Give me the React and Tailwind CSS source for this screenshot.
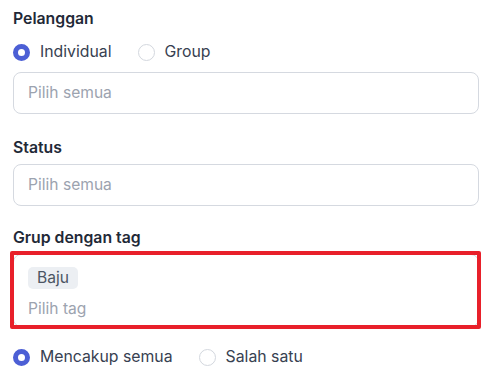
import React from "react";

function Radio({ checked, label }) {
  return (
    <div className="flex items-center gap-[10px]">
      {checked ? (
        <span className="w-[17px] h-[17px] rounded-full border-[5px] border-[#4c5fd5] bg-white box-border" />
      ) : (
        <span className="w-[17px] h-[17px] rounded-full border border-[#d3d7de] bg-white box-border" />
      )}
      <span className="text-[15.8px] leading-5 text-[#374151]">{label}</span>
    </div>
  );
}

export default function App() {
  return (
    <div
      className="w-[492px] h-[383px] bg-white px-[13px] pt-[9px] overflow-hidden"
      style={{ fontFamily: "Inter, 'Noto Sans', sans-serif" }}
    >
      <div className="text-[15.8px] leading-5 font-semibold text-[#1f2937]">Pelanggan</div>
      <div className="mt-[13px] flex items-center gap-[26px]">
        <Radio checked label="Individual" />
        <Radio label="Group" />
      </div>
      <div className="mt-[10px] h-[42px] rounded-lg border border-[#d5d9e0] flex items-center pl-[14px] text-[15.6px] text-[#9ca3af]">
        Pilih semua
      </div>

      <div className="mt-[24px] text-[15.8px] leading-5 font-semibold text-[#1f2937]">Status</div>
      <div className="mt-[6px] h-[42px] rounded-lg border border-[#d5d9e0] flex items-center pl-[14px] text-[15.6px] text-[#9ca3af]">
        Pilih semua
      </div>

      <div className="mt-[22px] text-[15.8px] leading-5 font-semibold text-[#1f2937]">Grup dengan tag</div>
      <div className="relative mt-[6px] h-[73px] rounded-lg border border-[#d5d9e0] pl-[14px] pt-[10px]">
        <div className="inline-flex h-[22px] items-center rounded-[5px] bg-[#eceff3] px-[9px] text-[15.6px] text-[#4b5563]">
          Baju
        </div>
        <div className="mt-[10px] text-[15.6px] leading-5 text-[#9ca3af]">Pilih tag</div>
        <div className="absolute -left-[4px] -right-[3px] -top-[4px] -bottom-[3px] border-4 border-[#e8202a] rounded-[2px] pointer-events-none" />
      </div>

      <div className="mt-[20px] flex items-center gap-[26px]">
        <Radio checked label="Mencakup semua" />
        <Radio label="Salah satu" />
      </div>
    </div>
  );
}
